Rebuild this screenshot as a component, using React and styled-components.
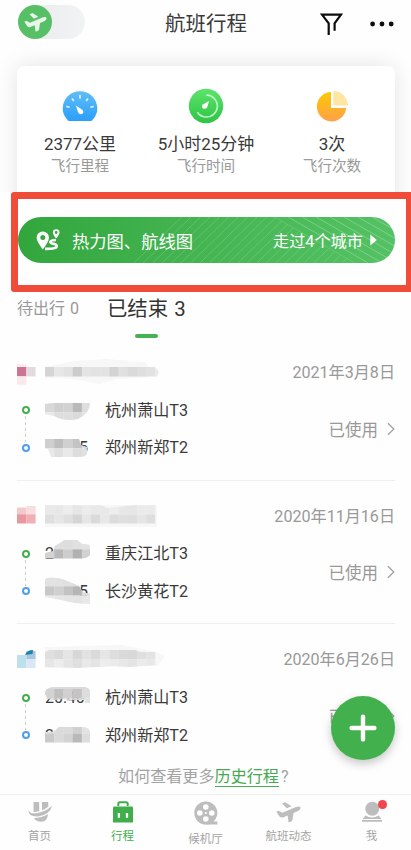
import React from 'react';
import styled, { createGlobalStyle } from 'styled-components';

const trips = [
  {
    date: '2021年3月8日',
    mask: {
      logo: [
        [0, 9, 9.4, 4, '#f9ebee'],
        [0, 12, 9.4, 9.4, '#cc7592'],
        [9.4, 12, 9.2, 9.4, '#e3dade'],
        [0, 21.4, 9.4, 8.5, '#fbeaec'],
      ],
      faint: 'M28 12 L58 6 L88 4 L128 7 L132 13 V22 L100 24 L82 29 L56 24 L28 23Z',
      shape: 'M28 12 H138 L142 17 L140 21.4 H28Z',
      top: 12,
      tones: [['#d5d5d5', '#e7e7e7', '#e2e2e2', '#cccccc', '#e4e4e4', '#e2e2e2', '#e3e3e3', '#d3d3d3', '#e0e0e0', '#dadada', '#dedede', '#e2e2e2', '#e9e9e9']],
    },
    from: {
      name: '杭州萧山T3',
      time: '',
      top: 4,
      shape: 'M0 5 L10 4 H45 Q45 14 33 20 Q20 23 9 17 L0 15Z',
      tones: [['#d8d8d8', '#cfcfcf', '#d2d2d2', '#b9b9b9', '#dddddd'], ['#e8e8e8', '#dddddd', '#dedede', '#dadada', '#e3e3e3']],
    },
    to: {
      name: '郑州新郑T2',
      time: '5',
      end: true,
      top: 3,
      shape: 'M0 3 H34 L36 9 L42 11 V17 Q42 21 34 21 L6 21 L3 13 L0 12Z',
      tones: [['#cfcfcf', '#bebebe', '#d0d0d0', '#c4c4c4', '#dcdcdc'], ['#e8e8e8', '#dfdfdf', '#e9e9e9', '#dddddd', '#e0e0e0']],
    },
  },
  {
    date: '2020年11月16日',
    mask: {
      logo: [
        [0, 8.6, 9.4, 8, '#f3c9cd'],
        [9.4, 7, 9.2, 9.6, '#f8dcde'],
        [0, 15.5, 9.4, 9, '#e9989f'],
        [9.4, 15.5, 9.2, 9, '#f0aeb5'],
      ],
      faint: 'M28 6 H140 V28 H28Z',
      shape: 'M28 6 H84 L90 9 L118 6 H138.4 V24.6 H28Z',
      top: 6.2,
      tones: [
        ['#e9e9e9', '#e8e8e8', '#ededed', '#e6e6e6', '#ececec', '#e9e9e9', '#e8e8e8', '#ededed', '#e7e7e7', '#e6e6e6', '#ebebeb', '#eaeaea'],
        ['#dfdfdf', '#e6e6e6', '#dfdfdf', '#d5d5d5', '#e6e6e6', '#dadada', '#e8e8e8', '#dcdcdc', '#dfdfdf', '#dedede', '#e5e5e5', '#dedede'],
      ],
    },
    from: {
      name: '重庆江北T3',
      time: '2',
      top: -2,
      shape: 'M0 11 L8 9 L10 4 L20 -2 H32 L37 2 L45 3 V13 Q42 16.5 36 16.5 H0Z',
      tones: [['#e5e5e5', '#dedede', '#dddddd', '#e1e1e1', '#e3e3e3'], ['#d3d3d3', '#b9b9b9', '#cdcdcd', '#b1b1b1', '#d1d1d1']],
    },
    to: {
      name: '长沙黄花T2',
      time: '5',
      end: true,
      top: -3,
      shape: 'M2 -2 Q14 -3 24 2 L34 6 L38 12 L45 14 V24 Q30 24 16 20 L0 17 V0Z',
      tones: [['#e2e2e2', '#e2e2e2', '#e0e0e0', '#dedede', '#e0e0e0'], ['#c8c8c8', '#d0d0d0', '#c3c3c3', '#b5b5b5', '#dddddd'], ['#e9e9e9', '#e6e6e6', '#e4e4e4', '#e4e4e4', '#e8e8e8']],
    },
  },
  {
    date: '2020年6月26日',
    mask: {
      logo: [
        [0, 13, 9.4, 13, '#bedfec'],
        [9.4, 9, 9.2, 8.5, '#a9c6df'],
        [9.4, 17, 9.2, 9, '#d9e8f4'],
      ],
      accent: 'M8 13 Q10 8 16 8 L15.5 12Z',
      faint: 'M28 5 L105 3 L139 10 L148 14 L140 24 L28 26Z',
      shape: 'M28 10 L32 8 H118 L123 10 H138.4 V23 L112 25 L96 24 L62 26 L28 25Z',
      top: 8,
      tones: [
        ['#dfdfdf', '#dadada', '#e5e5e5', '#d7d7d7', '#e2e2e2', '#dadada', '#e5e5e5', '#dddddd', '#dadada', '#d8d8d8', '#dfdfdf', '#e3e3e3'],
        ['#e6e6e6', '#ededed', '#e5e5e5', '#dfdfdf', '#e9e9e9', '#e4e4e4', '#ededed', '#ebebeb', '#e7e7e7', '#e4e4e4', '#ebebeb', '#e8e8e8'],
      ],
    },
    from: {
      name: '杭州萧山T3',
      time: '20:40',
      top: 3,
      shape: 'M0 6 Q2 1 9 1 H40 Q45 2 45 6 V17 H40 V14 H24 L18 13 L10 14 L2 13Z',
      tones: [['#d3d3d3', '#c0c0c0', '#d0d0d0', '#c4c4c4', '#dddddd'], ['#d8d8d8', '#cdcdcd', '#dfdfdf', '#d5d5d5', '#e2e2e2']],
    },
    to: {
      name: '郑州新郑T2',
      time: '2',
      top: 0.5,
      shape: 'M0 8 L9 7.5 L14 3 L38 3 Q45 4 45 8 V18.6 H0Z',
      tones: [['#dddddd', '#dadada', '#dbdbdb', '#d0d0d0', '#e3e3e3'], ['#cacaca', '#dadada', '#d3d3d3', '#b9b9b9', '#dddddd']],
    },
  },
];

const Cells = ({ tones, x = 0, y = 0 }) =>
  tones.map((row, r) =>
    row.map((fill, c) => (
      <rect key={`${r}-${c}`} x={x + c * 9.2} y={y + r * 9.3} width="9.4" height={r === tones.length - 1 ? 14 : 9.4} fill={fill} />
    ))
  );

const FlightMask = ({ id, mask }) => (
  <svg width="150" height="32" viewBox="0 0 150 32">
    <clipPath id={id}>
      <path d={mask.shape} />
    </clipPath>
    <path d={mask.faint} fill="#f7f7f7" />
    {mask.logo.map(([x, y, w, h, fill]) => (
      <rect key={`${x}-${y}`} x={x} y={y} width={w} height={h} fill={fill} />
    ))}
    {mask.accent && <path d={mask.accent} fill="#1c83ad" />}
    <g clipPath={`url(#${id})`}>
      <Cells tones={mask.tones} x={28} y={mask.top} />
    </g>
  </svg>
);

const Stop = ({ id, stop, last }) => (
  <StopRow>
    <Marker $last={last} />
    <Time $end={stop.end}>
      {stop.time}
      <TimeMask width="48" height="28" viewBox="0 -3 48 28">
        <clipPath id={id}>
          <path d={stop.shape} />
        </clipPath>
        <g clipPath={`url(#${id})`}>
          <rect y="-3" width="48" height="8" fill="#dadada" />
          <Cells tones={stop.tones} y={stop.top} />
        </g>
      </TimeMask>
    </Time>
    <Airport>{stop.name}</Airport>
  </StopRow>
);

const Trip = ({ trip, index }) => (
  <TripBox $last={index === trips.length - 1}>
    <TripHead>
      <FlightMask id={`flight${index}`} mask={trip.mask} />
      <DateText>{trip.date}</DateText>
    </TripHead>
    <TripBody>
      <div>
        <Stop id={`from${index}`} stop={trip.from} />
        <Stop id={`to${index}`} stop={trip.to} last />
      </div>
      <Status>
        已使用
        <svg width="8" height="14" viewBox="0 0 8 14" fill="none" stroke="#a2a2a2" strokeWidth="1.3">
          <path d="M1 1.2 L6.8 7 L1 12.8" />
        </svg>
      </Status>
    </TripBody>
  </TripBox>
);

const PlaneShape = () => (
  <path d="M6 2.6 L9.2 1.2 L15.6 5.2 L10.8 7.3Z M.3 10.8 L2.6 9.7 L6.4 11.7 L20 6 Q24.4 4.6 24.6 6.8 Q24.6 8.8 22 10 L17.5 12 L16.2 20 L12.6 21.5 L11.6 14.5 L7 16.4 Q4.8 17 3.6 15.6Z" />
);

const BannerLines = () => (
  <Lines viewBox="0 0 378 46" fill="none" stroke="#fff" strokeOpacity=".2" strokeWidth="1">
    <clipPath id="leftLines">
      <path d="M100 0 H257 L337 46 H100Z" />
    </clipPath>
    <clipPath id="rightLines">
      <path d="M257 0 H378 V46 H337Z" />
    </clipPath>
    <g clipPath="url(#leftLines)" strokeOpacity=".16">
      {[...Array(23)].map((_, i) => (
        <path key={i} d={`M${116 + i * 9.5} 46 l48 -46`} />
      ))}
    </g>
    <g clipPath="url(#rightLines)" strokeOpacity=".26">
      {[...Array(12)].map((_, i) => (
        <path key={i} d={`M${257 + i * 14} 0 l80 46`} />
      ))}
    </g>
  </Lines>
);

const App = () => {
  return (
    <Page>
      <GlobalStyle />
      <Header>
        <Toggle>
          <Knob>
            <svg width="23" height="21" viewBox="0 0 25 23" fill="#e6f7e8">
              <PlaneShape />
            </svg>
          </Knob>
        </Toggle>
        <Title>航班行程</Title>
        <Actions>
          <svg width="23" height="22" viewBox="0 0 23 22" fill="none" stroke="#0c0c0c" strokeWidth="2.2">
            <path d="M8.7 22 V10.3 L2 1.6 H21 L14.6 10.3 V17.8" />
          </svg>
          <svg width="24" height="6" viewBox="0 0 24 6" fill="#0c0c0c">
            <circle cx="2.6" cy="3" r="2.4" />
            <circle cx="12" cy="3" r="2.4" />
            <circle cx="21.2" cy="3" r="2.4" />
          </svg>
        </Actions>
      </Header>

      <Summary>
        <Card>
          <Stat>
            <svg width="36" height="36" viewBox="0 0 36 36">
              <defs>
                <linearGradient id="blue" x2="0" y2="1">
                  <stop stopColor="#61bdf5" />
                  <stop offset="1" stopColor="#2a9ffb" />
                </linearGradient>
              </defs>
              <path d="M6.6 33 Q.7 27.5 .7 20.5 A17.3 17.3 0 0 1 35.3 20.5 Q35.3 27.5 29.4 33Z" fill="url(#blue)" />
              <path d="M18 7 v3.4 M10 10.4 l1.8 2.6 M26 10.4 l-1.8 2.6 M4.2 18.5 l3.4 .6 M31.8 18.5 l-3.4 .6" stroke="#d9f2ff" strokeWidth="1.7" />
              <path d="M13.8 17.4 L20.6 22 Q22.5 25 19.7 26.1 Q17 26.6 16 24Z" fill="#fff" />
            </svg>
            <Value>2377公里</Value>
            <Label>飞行里程</Label>
          </Stat>
          <Stat>
            <svg width="36" height="36" viewBox="0 0 36 36">
              <defs>
                <linearGradient id="green" x2="0" y2="1">
                  <stop stopColor="#5be46c" />
                  <stop offset="1" stopColor="#2fc344" />
                </linearGradient>
              </defs>
              <circle cx="18" cy="18" r="17.2" fill="url(#green)" />
              <path d="M18.3 7.2 A10.9 10.9 0 1 1 9.4 24.2" fill="none" stroke="#bdf5c5" strokeWidth="1.7" />
              <path d="M21 12.9 L19.2 19.2 Q17.2 21.8 14.8 20.2 Q13 18.2 15.2 16.2Z" fill="#fff" />
            </svg>
            <Value>5小时25分钟</Value>
            <Label>飞行时间</Label>
          </Stat>
          <Stat>
            <svg width="36" height="36" viewBox="0 0 36 36">
              <defs>
                <linearGradient id="orange" x2="0" y2="1">
                  <stop stopColor="#fdc800" />
                  <stop offset="1" stopColor="#ffa14b" />
                </linearGradient>
              </defs>
              <path d="M17 4 V20 H32.2 A14.7 14.7 0 1 1 17 4Z" fill="url(#orange)" />
              <path d="M19.4 3 A14.8 14.8 0 0 1 34 17.6 H19.4Z" fill="#ffe6a2" />
            </svg>
            <Value>3次</Value>
            <Label>飞行次数</Label>
          </Stat>
        </Card>
      </Summary>

      <Frame>
        <Banner>
          <BannerLines />
          <svg width="24" height="22" viewBox="0 0 24 22">
            <path fill="#fff" fillRule="evenodd" d="M6.8 2.4 A6.2 6.2 0 0 1 13 8.6 Q13 12.5 6.8 20.5 Q.6 12.5 .6 8.6 A6.2 6.2 0 0 1 6.8 2.4Z M6.8 6 A2.5 2.5 0 1 0 6.8 11 A2.5 2.5 0 1 0 6.8 6Z" />
            <path fill="#fff" fillRule="evenodd" d="M20.2 .2 A3.3 3.3 0 0 1 23.5 3.5 Q23.5 5.7 20.2 9.4 Q16.9 5.7 16.9 3.5 A3.3 3.3 0 0 1 20.2 .2Z M20.2 2.1 A1.4 1.4 0 1 0 20.2 4.9 A1.4 1.4 0 1 0 20.2 2.1Z" />
            <path fill="none" stroke="#fff" strokeWidth="2.7" d="M20 11 Q14.4 11.2 14.3 13 Q14.6 14.3 17.8 14.8 Q21.4 15.7 20.6 17.8 Q19.6 19.9 9 19.8" />
          </svg>
          <BannerTitle>热力图、航线图</BannerTitle>
          <Cities>走过4个城市</Cities>
          <svg width="7" height="12" viewBox="0 0 7 12" fill="#fff">
            <path d="M.3 .5 L6.8 6 L.3 11.5Z" />
          </svg>
        </Banner>
      </Frame>

      <Tabs>
        <Tab>待出行 0</Tab>
        <Tab $active>已结束 3</Tab>
      </Tabs>

      {trips.map((trip, i) => (
        <Trip key={trip.date} trip={trip} index={i} />
      ))}
      <More>
        如何查看更多<a>历史行程</a>?
      </More>

      <NavBar>
        <NavItem>
          <svg width="24" height="22" viewBox="0 0 24 22" fill="#bdbdbd">
            <path d="M5.5 1 H11.2 V10 Q8.5 11.2 5.5 11Z M14 1 H20.2 V5.8 Q17.5 8 14 9.2Z" />
            <path d="M.4 8.4 Q1.4 13.3 9.5 12 Q17 10.8 24 5 Q21.7 14 10 15.4 Q.3 16 .4 8.4Z" />
            <path d="M6 17 Q13.5 16.9 20 12.9 Q19.6 20.6 13 20.8 Q8.2 20.8 6 17Z" />
          </svg>
          首页
        </NavItem>
        <NavItem $active>
          <svg width="24" height="22" viewBox="0 0 24 22">
            <path d="M7.3 5 V2.8 Q7.3 1.2 9 1.2 H15 Q16.7 1.2 16.7 2.8 V5" fill="none" stroke="#3fae4b" strokeWidth="2" />
            <rect x="2" y="5.6" width="20" height="16" rx="1.2" fill="#3fae4b" />
            <path d="M7.9 12 v4.7 M16 12 v4.7" stroke="#fff" strokeWidth="2.3" />
          </svg>
          行程
        </NavItem>
        <NavItem $low>
          <svg width="26" height="24" viewBox="0 0 26 24">
            <circle cx="12.8" cy="12" r="11.5" fill="#bdbdbd" />
            <path d="M13 20.5 H24.4 V23.5 H13Z" fill="#bdbdbd" />
            <g fill="#fff">
              <circle cx="12.8" cy="6" r="2.8" />
              <circle cx="6.8" cy="12" r="2.8" />
              <circle cx="18.8" cy="12" r="2.8" />
              <circle cx="12.8" cy="18" r="2.8" />
              <circle cx="12.8" cy="12" r="1.1" />
            </g>
          </svg>
          候机厅
        </NavItem>
        <NavItem>
          <svg width="25" height="22" viewBox="0 0 25 22" fill="#bdbdbd">
            <PlaneShape />
          </svg>
          航班动态
        </NavItem>
        <NavItem>
          <svg width="24" height="22" viewBox="0 0 24 22" fill="#bdbdbd">
            <circle cx="12.3" cy="7.8" r="7" />
            <path d="M5.6 14.6 Q12 18.4 18.6 14.6 L21.5 18 H2.6Z M2 19 H22 V20.8 H2Z" />
          </svg>
          我
          <Badge />
          <Smudge width="80" height="38" viewBox="0 0 80 38" fill="#fff" fillOpacity=".65">
            <path d="M53 26 L57 23 L58 26 L54 29Z M64 20 L70 18 L66 23Z M62 31 L68 29 L63 34Z M50 1 L56 0 L52 3Z" />
          </Smudge>
        </NavItem>
      </NavBar>

      <AddButton>
        <svg width="28" height="28" viewBox="0 0 28 28" stroke="#fff" strokeWidth="4.4" strokeLinecap="round">
          <path d="M14 2.6 V25.4 M2.6 14 H25.4" />
        </svg>
      </AddButton>
    </Page>
  );
};

const GlobalStyle = createGlobalStyle`
  body {
    margin: 0;
    background: #fefefe;
  }
  * {
    box-sizing: border-box;
  }
  svg {
    display: block;
    flex-shrink: 0;
  }
`;

const Page = styled.div`
  position: relative;
  display: flex;
  flex-direction: column;
  width: 411px;
  height: 850px;
  overflow: hidden;
  background: #fefefe;
  color: #3a3a3a;
  font-family: Roboto, 'Noto Sans CJK SC', sans-serif;
  white-space: nowrap;
`;

const Header = styled.header`
  display: grid;
  grid-template-columns: 1fr auto 1fr;
  align-items: center;
  height: 48px;
  padding: 0 17px 0 18px;
`;
const Toggle = styled.div`
  width: 67px;
  height: 34px;
  margin-top: -4px;
  border-radius: 17px;
  background: linear-gradient(90deg, #e8eaec, #f2f3f4);
`;
const Knob = styled.div`
  display: flex;
  align-items: center;
  justify-content: center;
  width: 34px;
  height: 34px;
  border-radius: 50%;
  background: #57c067;
`;
const Title = styled.h1`
  margin: 0;
  font-size: 20.5px;
  line-height: 30px;
  font-weight: 400;
`;
const Actions = styled.div`
  display: flex;
  align-items: center;
  justify-content: flex-end;
  gap: 27px;
`;

const Summary = styled.section`
  flex-shrink: 0;
  height: 144px;
  padding: 18px 16px 0 17px;
  overflow: hidden;
`;
const Card = styled.div`
  display: grid;
  grid-template-columns: repeat(3, 1fr);
  height: 150px;
  padding-top: 22px;
  border-radius: 7px;
  background: #fff;
  box-shadow: 0 0 22px rgba(0, 0, 0, 0.11);
`;
const Stat = styled.div`
  display: flex;
  flex-direction: column;
  align-items: center;
`;
const Value = styled.div`
  margin-top: 8px;
  font-size: 17px;
  line-height: 24px;
`;
const Label = styled.div`
  font-size: 14.6px;
  line-height: 20px;
  color: #999;
`;

const Frame = styled.div`
  flex-shrink: 0;
  width: 402px;
  height: 100px;
  margin-left: 11px;
  padding-top: 18px;
  border: 7px solid #ef4d39;
  border-radius: 3px;
  background: #fefefe;
`;
const Banner = styled.div`
  position: relative;
  display: flex;
  align-items: center;
  width: 377px;
  height: 46px;
  padding: 0 18px 0 18px;
  overflow: hidden;
  border-radius: 23px;
  background: linear-gradient(90deg, #32a63d, #45b552 50%, #54c264);
  color: #fff;
`;
const Lines = styled.svg`
  position: absolute;
  inset: 0;
`;
const BannerTitle = styled.div`
  flex: 1;
  margin-left: 12px;
  font-size: 17.3px;
`;
const Cities = styled.div`
  margin-right: 7px;
  font-size: 16.2px;
`;

const Tabs = styled.div`
  display: flex;
  flex-shrink: 0;
  gap: 28px;
  height: 45px;
  padding-left: 17px;
`;
const Tab = styled.div`
  height: 45px;
  line-height: 34px;
  font-size: ${(props) => (props.$active ? '20.4px' : '16px')};
  word-spacing: 1px;
  color: ${(props) => (props.$active ? '#333' : '#999')};

  &::after {
    content: '';
    display: ${(props) => (props.$active ? 'block' : 'none')};
    width: 23px;
    height: 4px;
    margin: 8px auto 0;
    border-radius: 2px;
    background: #46b152;
  }
`;

const TripBox = styled.div`
  flex-shrink: 0;
  height: 143.7px;
  margin: 0 16px 0 17px;
  padding-top: 22px;
  border-bottom: 1px solid ${(props) => (props.$last ? 'transparent' : '#efefef')};
`;
const TripHead = styled.div`
  display: flex;
  align-items: center;
  justify-content: space-between;
  height: 24px;
`;
const DateText = styled.div`
  font-size: 16.1px;
  color: #999;
`;
const TripBody = styled.div`
  display: flex;
  align-items: center;
  justify-content: space-between;
  margin-top: 9px;
`;
const StopRow = styled.div`
  display: flex;
  align-items: center;
  height: 37.5px;
`;
const Marker = styled.div`
  position: relative;
  width: 8px;
  height: 8px;
  margin: -1px 15.5px 0 4.5px;
  border: 2.2px solid ${(props) => (props.$last ? '#4f9fe8' : '#45ae51')};
  border-radius: 50%;

  &::after {
    content: '';
    position: absolute;
    display: ${(props) => (props.$last ? 'none' : 'block')};
    left: 1.5px;
    top: 8px;
    width: 1px;
    height: 26px;
    background: repeating-linear-gradient(#ccc 0 3px, transparent 3px 6px);
  }
`;
const Time = styled.div`
  position: relative;
  width: 43px;
  height: 22px;
  margin-right: 17px;
  line-height: 22px;
  font-size: 16px;
  text-align: ${(props) => (props.$end ? 'right' : 'left')};
`;
const TimeMask = styled.svg`
  position: absolute;
  left: 0;
  top: -4px;
`;
const Airport = styled.div`
  font-size: 16.1px;
  line-height: 24px;
`;
const Status = styled.div`
  display: flex;
  align-items: center;
  gap: 9px;
  margin-top: -2px;
  font-size: 16.5px;
  color: #999;
`;

const More = styled.p`
  height: 24px;
  margin: -3px 0 0 118px;
  line-height: 24px;
  font-size: 16.1px;
  color: #a3a3a3;

  a {
    margin-right: 2px;
    border-bottom: 1px solid #46b152;
    color: #46a951;
  }
`;

const NavBar = styled.nav`
  display: grid;
  grid-template-columns: repeat(5, 83px);
  justify-content: center;
  flex-shrink: 0;
  height: 56px;
  margin-top: auto;
  border-top: 1px solid #efefef;
`;
const NavItem = styled.div`
  position: relative;
  display: flex;
  flex-direction: column;
  align-items: center;
  gap: ${(props) => (props.$low ? '6px' : '5px')};
  padding-top: 6px;
  font-size: 11.5px;
  line-height: 16px;
  color: ${(props) => (props.$active ? '#3fae4b' : '#a3a3a3')};
`;
const Badge = styled.span`
  position: absolute;
  left: 48px;
  top: 5px;
  width: 8.5px;
  height: 8.5px;
  border-radius: 50%;
  background: #f0474f;
`;
const Smudge = styled.svg`
  position: absolute;
  left: -18px;
  top: 18px;
`;

const AddButton = styled.button`
  position: absolute;
  left: 331px;
  top: 696px;
  display: flex;
  align-items: center;
  justify-content: center;
  width: 64px;
  height: 64px;
  padding: 0;
  border: none;
  border-radius: 50%;
  background: #42b04d;
  box-shadow: 0 4px 10px rgba(0, 0, 0, 0.22);
`;

export default App;
